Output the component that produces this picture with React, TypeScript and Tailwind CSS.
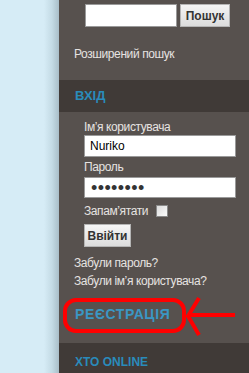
import React from "react";

export default function App() {
  const font = { fontFamily: '"Liberation Sans", Arial, sans-serif' };
  return (
    <div className="flex w-[249px] h-[373px] overflow-hidden" style={font}>
      <div className="w-[59px] h-full bg-[linear-gradient(to_right,#d6ecf6_0px,#d6ecf6_44px,#c4dbe5_52px,#a9bec8_59px)]" />
      <div className="flex-1 h-full bg-[#57514e] flex flex-col relative">
        <div className="flex items-start pt-[4px] pl-[26px] gap-[3px]">
          <div className="w-[92px] h-[23px] bg-white border border-[#9a9a9a]" />
          <div className="w-[50px] h-[23px] border border-[#b5b5b5] bg-[linear-gradient(#f4f4f4,#dcdcdc)] flex items-center justify-center text-[12px] font-bold text-[#333]">
            Пошук
          </div>
        </div>
        <div className="pl-[15px] mt-[20px] text-[12px] leading-[14px] tracking-[-0.4px] text-[#e6e3e1]">Розширений пошук</div>
        <div className="mt-[19px] h-[32px] bg-[#403a37] flex items-center pl-[16px] text-[13px] font-bold text-[#2a8bbb]">
          ВХІД
        </div>
        <div className="pl-[25px] flex flex-col">
          <div className="mt-[8px] text-[12px] leading-[14px] tracking-[-0.4px] text-[#e6e3e1]">Ім’я користувача</div>
          <div className="mt-[1px] w-[152px] h-[22px] bg-white border border-[#9a9a9a] flex items-center pl-[5px] text-[12px] text-black">
            Nuriko
          </div>
          <div className="mt-[3px] text-[12px] leading-[14px] tracking-[-0.4px] text-[#e6e3e1]">Пароль</div>
          <div className="mt-[3px] w-[152px] h-[21px] bg-white border border-[#9a9a9a] flex items-center pl-[6px] text-[18px] leading-[18px] text-[#333] tracking-[0.4px]">
            ••••••••
          </div>
          <div className="mt-[6px] flex items-center gap-[8px]">
            <span className="text-[12px] leading-[14px] tracking-[-0.4px] text-[#e6e3e1]">Запам’ятати</span>
            <span className="w-[12px] h-[12px] border border-[#8a8a8a] bg-[linear-gradient(135deg,#dcdcdc,#fbfbfb)]" />
          </div>
          <div className="mt-[6px] w-[47px] h-[23px] border border-[#b5b5b5] bg-[linear-gradient(#f6f6f6,#dcdcdc)] flex items-center justify-center text-[12px] font-bold text-[#333]">
            Ввійти
          </div>
        </div>
        <div className="pl-[15px] mt-[7px] text-[12px] leading-[18px] tracking-[-0.4px] text-[#e6e3e1]">
          <div>Забули пароль?</div>
          <div>Забули ім’я користувача?</div>
        </div>
        <div className="h-[53px] flex items-center pl-[16px] pb-[4px] text-[14px] font-bold tracking-[0.6px] text-[#3a97c4] relative">
          РЕЄСТРАЦІЯ
          <svg className="absolute left-0 top-0" width="190" height="53" viewBox="0 0 190 53">
            <rect x="6" y="10" width="119" height="31" rx="11" fill="none" stroke="#ff0000" strokeWidth="4" />
            <line x1="131" y1="25" x2="176" y2="25" stroke="#ff0000" strokeWidth="4" />
            <polyline points="140,8 129,26 140,45" fill="none" stroke="#ff0000" strokeWidth="4" />
          </svg>
        </div>
        <div className="flex-1 bg-[#403a37] flex items-start pt-[10px] pl-[16px] text-[12px] font-bold text-[#2a8bbb]">
          XTO ONLINE
        </div>
      </div>
    </div>
  );
}
